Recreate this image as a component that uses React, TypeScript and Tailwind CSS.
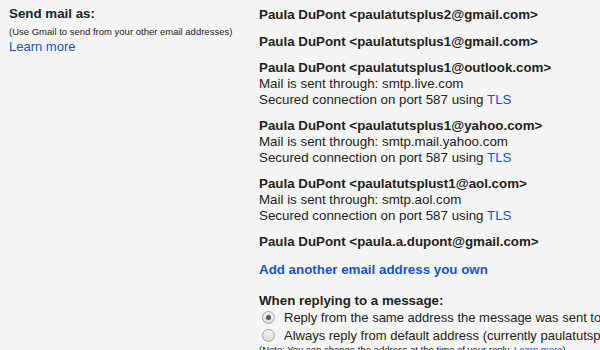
const accounts = [
  { addr: "paulatutsplus2@gmail.com" },
  { addr: "paulatutsplus1@gmail.com" },
  { addr: "paulatutsplus1@outlook.com", smtp: "smtp.live.com" },
  { addr: "paulatutsplus1@yahoo.com", smtp: "smtp.mail.yahoo.com" },
  { addr: "paulatutsplust1@aol.com", smtp: "smtp.aol.com" },
  { addr: "paula.a.dupont@gmail.com" },
];

function Radio({ checked }: { checked?: boolean }) {
  return (
    <span className="inline-flex items-center justify-center w-[13px] h-[13px] rounded-full border border-[#a5a5a5] bg-gradient-to-b from-[#f4f4f4] to-[#dcdcdc] ml-[3px] mr-[9px] shrink-0">
      {checked && <span className="w-[5px] h-[5px] rounded-full bg-[#555]" />}
    </span>
  );
}

export default function App() {
  return (
    <div
      className="w-[600px] h-[350px] overflow-hidden bg-[#f5f5f5] text-[#222] text-[13.33px] leading-[16px] flex"
      style={{ fontFamily: '"Liberation Sans", Arial, sans-serif' }}
    >
      {/* Label column */}
      <div className="w-[250px] shrink-0 pl-[9px] pt-[6px]">
        <div className="font-bold">Send mail as:</div>
        <div className="text-[9.5px] leading-[12px] mt-[4px]">(Use Gmail to send from your other email addresses)</div>
        <div className="text-[#15c] text-[13px] mt-[1px]">Learn more</div>
      </div>

      {/* Addresses */}
      <div className="pl-[9px] pt-[7px] whitespace-nowrap">
        {accounts.map((a, i) => (
          <div key={a.addr} className={i === 0 ? "mb-[11px]" : "mb-[10px]"}>
            <div className="font-bold">Paula DuPont &lt;{a.addr}&gt;</div>
            {a.smtp && (
              <>
                <div>Mail is sent through: {a.smtp}</div>
                <div>
                  Secured connection on port 587 using <span className="text-[#15c]">TLS</span>
                </div>
              </>
            )}
          </div>
        ))}
        <div className="font-bold text-[#15c] mt-[12px]">Add another email address you own</div>

        <div className="font-bold mt-[15px]">When replying to a message:</div>
        <div className="flex items-center h-[17px] text-[13px]">
          <Radio checked />
          <span>Reply from the same address the message was sent to</span>
        </div>
        <div className="flex items-center mt-[1px] h-[17px] text-[13px]">
          <Radio />
          <span>Always reply from default address (currently paulatutsplus2@gmail.com)</span>
        </div>
        <div className="text-[9.5px] leading-[12px]">
          (Note: You can change the address at the time of your reply. <span className="text-[#15c]">Learn more</span>)
        </div>
      </div>
    </div>
  );
}
